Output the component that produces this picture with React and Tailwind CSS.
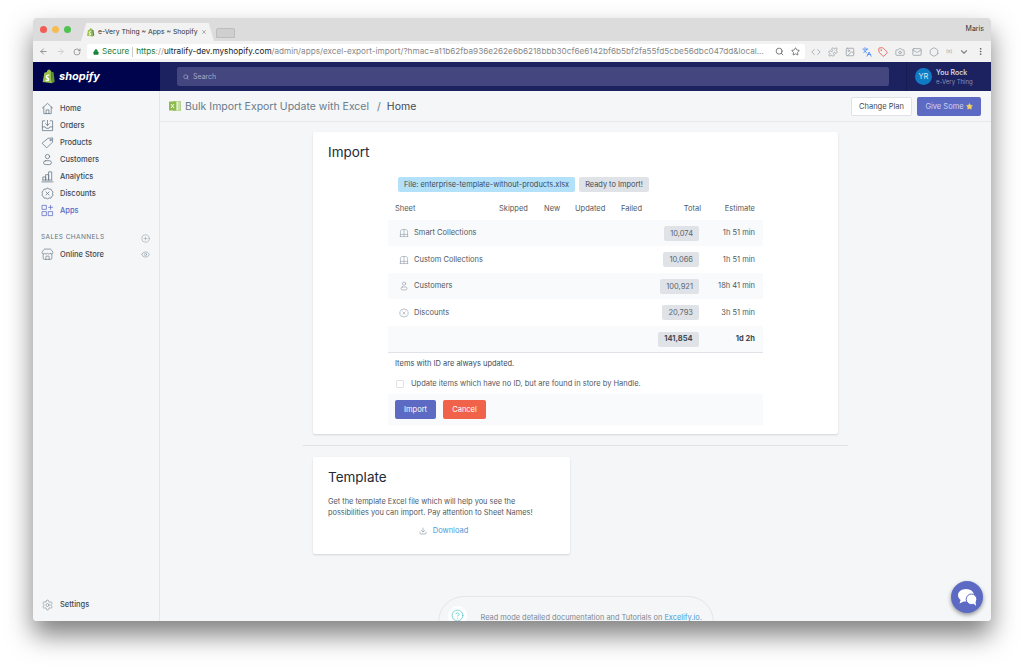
import React from 'react';
import {
  Tag, CirclePlus, Eye, Store, Settings, Search, ArrowLeft, ArrowRight, RotateCw, Lock, Star, X, MoreVertical,
  Download, Camera, Mail, Code, Languages, Puzzle, Image, Hexagon, CircleHelp, ChevronDown,
} from 'lucide-react';

const font = 'font-["Inter","Liberation_Sans",sans-serif]';

function Glyph({ size = 13, className = '', children }) {
  return (
    <svg width={size} height={size} viewBox="0 0 14 14" fill="none" stroke="currentColor" strokeWidth="0.8" strokeLinecap="round" strokeLinejoin="round" className={className}>
      {children}
    </svg>
  );
}

const HomeGlyph = (p) => (
  <Glyph {...p}><path d="M1.500 6.500 7 1.500l5.500 5M3 5.500V12.500H11V5.500M5.500 12.500V8.500H8.500V12.500" /></Glyph>
);
const OrdersGlyph = (p) => (
  <Glyph {...p}><path d="M4 2H1.500V12.500H12.500V2H10M1.500 8.500H4.500L5.500 10H8.500L9.500 8.500H12.500M7 1.500V7M5 5l2 2 2-2" /></Glyph>
);
const ProductGlyph = (p) => (
  <Glyph {...p}><path d="M1.500 7.500 7.500 2.500 12.500 2 12.500 6.500 6.500 12.500Z" /><circle cx="10.300" cy="4.300" r="0.800" /></Glyph>
);
const PersonGlyph = (p) => (
  <Glyph {...p}><circle cx="7" cy="3.800" r="2.300" /><rect x="2.800" y="8.300" width="8.400" height="4.200" rx="2.100" /></Glyph>
);
const AnalyticsGlyph = (p) => (
  <Glyph {...p}><path d="M1 12.800H13M2 10.800V7.500H5V10.800M5 10.800V5H8.200V10.800M8.200 10.800V2H11.500V10.800M2 10.800H11.500" /></Glyph>
);
const DiscountGlyph = (p) => (
  <Glyph {...p}><path d="M7 1.200 8.700 2.300 10.700 2.200 11.500 4 13 5.300 12.400 7.200 13 9 11.500 10.200 10.700 12 8.700 11.800 7 12.800 5.300 11.800 3.300 12 2.500 10.200 1 9 1.600 7.200 1 5.300 2.500 4 3.300 2.200 5.300 2.300Z" /><path d="M5.300 5.300 8.700 8.700M8.700 5.300 5.300 8.700" /></Glyph>
);
const AppsGlyph = (p) => (
  <Glyph {...p}><rect x="1.500" y="1.500" width="4.300" height="4.300" /><rect x="1.500" y="8.200" width="4.300" height="4.300" /><rect x="8.200" y="8.200" width="4.300" height="4.300" /><path d="M10.300 1.500V5.800M8.200 3.600H12.500" /></Glyph>
);
const CollectionGlyph = (p) => (
  <Glyph {...p}><path d="M2 12V4.500C2 3 3.500 2 7 2S12 3 12 4.500V12M7 2V12M1.500 12H12.500M2 9H12" /></Glyph>
);

const navItems = [
  { label: 'Home', icon: HomeGlyph },
  { label: 'Orders', icon: OrdersGlyph },
  { label: 'Products', icon: ProductGlyph },
  { label: 'Customers', icon: PersonGlyph },
  { label: 'Analytics', icon: AnalyticsGlyph },
  { label: 'Discounts', icon: DiscountGlyph },
];

const rows = [
  { name: 'Smart Collections', icon: CollectionGlyph, total: '10,074', estimate: '1h 51 min', shaded: true, h: 'h-[26px]' },
  { name: 'Custom Collections', icon: CollectionGlyph, total: '10,066', estimate: '1h 51 min', shaded: false, h: 'h-[27px]' },
  { name: 'Customers', icon: PersonGlyph, total: '100,921', estimate: '18h 41 min', shaded: true, h: 'h-[26px]' },
  { name: 'Discounts', icon: DiscountGlyph, total: '20,793', estimate: '3h 51 min', shaded: false, h: 'h-[27px]' },
];

function ShopifyBag({ size = 16 }) {
  return (
    <svg width={size} height={size} viewBox="0 0 16 18" className="shrink-0">
      <path d="M1 15.500 3 4.500 6 3.500C6.500 1.500 8 .5 9.500.8L11 2.500 12.200 17 1 15.500Z" fill="#95bf47" />
      <path d="M11 2.500 12.200 3.600 14 4 15.500 15.200 12.200 17Z" fill="#5e8e3e" />
      <path d="M9.200 6.800 8.700 8.400C7.600 7.900 6.400 8.200 6.400 9 6.400 10 9 10.400 9 12.500 9 14.200 7.400 15 6 14.800 5.200 14.700 4.600 14.300 4.300 14L4.700 12.500C5.200 12.900 6.600 13.500 6.800 12.700 7 11.500 4.500 11.200 4.500 9.200 4.500 7.300 6.900 6 9.200 6.800Z" fill="#fff" />
    </svg>
  );
}

function ExcelMark() {
  return (
    <svg width="12" height="12" viewBox="0 0 12 12">
      <rect x="4" y="1" width="8" height="10" rx="0.5" fill="#b5d48a" />
      <path d="M6 3H11M6 5H11M6 7H11M6 9H11M8.500 1V11" stroke="#fff" strokeWidth="0.5" />
      <rect x="0" y="1.500" width="7" height="9" rx="0.5" fill="#8cba4e" />
      <path d="M2 4 5 8M5 4 2 8" stroke="#fff" strokeWidth="0.9" />
    </svg>
  );
}

function ChatGlyph() {
  return (
    <svg width="21" height="19" viewBox="0 0 21 19">
      <path d="M9 1C4.500 1 1 3.800 1 7.300c0 1.900 1 3.500 2.600 4.700L2.500 15.500 6.700 13.400c.7.100 1.500.2 2.300.2 4.500 0 8-2.800 8-6.300S13.500 1 9 1Z" fill="#fff" />
      <circle cx="14.500" cy="11.300" r="5.300" fill="#fff" stroke="#5c6ac4" strokeWidth="1" />
      <path d="M16.500 15.500 19 18 18.600 13.800Z" fill="#fff" />
    </svg>
  );
}

function Sidebar() {
  return (
    <aside className="w-[127px] shrink-0 border-r border-[#e3e6ea] bg-[#f4f6f8] flex flex-col pt-[9px]">
      {navItems.map((item) => (
        <div key={item.label} className="h-[17px] flex items-center pl-[8px]">
          <item.icon size={13} className="text-[#637381]" />
          <span className="ml-[6px] text-[7.5px] font-medium text-[#3f4a54]">{item.label}</span>
        </div>
      ))}
      <div className="h-[17px] flex items-center pl-[8px]">
        <AppsGlyph size={13} className="text-[#5c6ac4]" />
        <span className="ml-[6px] text-[7.5px] font-medium text-[#5c6ac4]">Apps</span>
      </div>
      <div className="mt-[11px] h-[16px] flex items-center justify-between pl-[8px] pr-[9px]">
        <span className="text-[6.5px] tracking-[0.4px] text-[#637381]">SALES CHANNELS</span>
        <CirclePlus size={9} strokeWidth={1.2} className="text-[#798c9c]" />
      </div>
      <div className="h-[17px] flex items-center justify-between pl-[8px] pr-[9px]">
        <div className="flex items-center">
          <Store size={13} strokeWidth={1.2} className="text-[#637381]" />
          <span className="ml-[6px] text-[7.5px] font-medium text-[#3f4a54]">Online Store</span>
        </div>
        <Eye size={9} strokeWidth={1.4} className="text-[#798c9c]" />
      </div>
      <div className="mt-auto mb-[8px] h-[17px] flex items-center pl-[8px]">
        <Settings size={12} strokeWidth={1} className="text-[#637381] w-[13px]" />
        <span className="ml-[6px] text-[7.5px] font-medium text-[#3f4a54]">Settings</span>
      </div>
    </aside>
  );
}

function ImportCard() {
  return (
    <section className="w-[525px] h-[302px] bg-white rounded-[2px] shadow-[0_1px_2px_rgba(63,63,68,0.18)] pt-[12px] px-[15px]">
      <h2 className="text-[13.5px] leading-[17px] text-[#212b36]">Import</h2>
      <div className="mt-[16px] ml-[70px] flex gap-[4px] h-[15px] text-[7.4px] text-[#3f4a54]">
        <span className="flex items-center px-[6px] rounded-[2px] bg-[#b4e1fa]">File: enterprise-template-without-products.xlsx</span>
        <span className="flex items-center px-[6px] rounded-[2px] bg-[#dfe3e8]">Ready to Import!</span>
      </div>
      <div className="ml-[60px] w-[375px] mt-[6px]">
        <div className="h-[22px] grid grid-cols-[104px_45px_31px_46px_42px_1fr_54px] items-center pl-[7px] pr-[8px] text-[7.5px] text-[#50585f]">
          <span>Sheet</span>
          <span>Skipped</span>
          <span>New</span>
          <span>Updated</span>
          <span>Failed</span>
          <span className="text-right">Total</span>
          <span className="text-right">Estimate</span>
        </div>
        {rows.map((row) => (
          <div key={row.name} className={`${row.h} flex items-center pl-[11px] pr-[8px] text-[7.5px] text-[#50585f] ${row.shaded ? 'bg-[#f9fafb]' : ''}`}>
            <row.icon size={10} className="text-[#8a97a5]" />
            <span className="ml-[5px]">{row.name}</span>
            <span className="ml-auto mr-[7px] h-[15px] pt-[1px] flex items-center px-[6px] rounded-[2px] bg-[#dfe3e8] text-[#5b6670]">{row.total}</span>
            <span className="w-[49px] text-right">{row.estimate}</span>
          </div>
        ))}
        <div className="h-[27px] flex items-center pr-[8px] text-[7.5px] font-bold text-[#3f4a54] bg-[#f9fafb] border-b border-[#dfe3e8]">
          <span className="ml-auto mr-[7px] h-[15px] flex items-center px-[6.5px] rounded-[2px] bg-[#dfe3e8]">141,854</span>
          <span className="w-[49px] text-right">1d 2h</span>
        </div>
        <p className="h-[22px] flex items-center pl-[7px] text-[7.5px] text-[#3f4a54]">Items with ID are always updated.</p>
        <label className="h-[17px] mb-[2px] flex items-center pl-[8px] text-[7.5px] text-[#50585f]">
          <span className="w-[8px] h-[8px] rounded-[1px] border border-[#dfe3e8] bg-white" />
          <span className="ml-[7px]">Update items which have no ID, but are found in store by Handle.</span>
        </label>
        <div className="h-[31px] bg-[#f9fafb] flex items-center gap-[7px] pl-[7px]">
          <button className="w-[41px] h-[19px] rounded-[2px] bg-[#5c6ac4] text-white text-[7.5px]">Import</button>
          <button className="w-[43px] h-[19px] rounded-[2px] bg-[#f0624a] text-white text-[7.5px]">Cancel</button>
        </div>
      </div>
    </section>
  );
}

function TemplateCard() {
  return (
    <section className="w-[257px] h-[97px] bg-white rounded-[2px] shadow-[0_1px_2px_rgba(63,63,68,0.18)] pt-[12px] px-[15px]">
      <h2 className="text-[13.5px] leading-[17px] text-[#212b36]">Template</h2>
      <p className="mt-[11px] text-[7.4px] leading-[10.5px] text-[#50585f]">
        Get the template Excel file which will help you see the possibilities you can import. Pay attention to Sheet Names!
      </p>
      <div className="mt-[7px] ml-[4px] flex items-center justify-center gap-[6px] text-[7.5px] text-[#4a9ad8]">
        <Download size={8} className="text-[#919eab]" />
        <span>Download</span>
      </div>
    </section>
  );
}

function Main() {
  return (
    <main className="flex-1 min-w-0 bg-[#f4f6f8] flex flex-col">
      <header className="h-[31px] shrink-0 border-b border-[#e6e9ec] flex items-center pl-[9px] pr-[10px]">
        <ExcelMark />
        <span className="ml-[4px] pt-[1px] text-[10.5px] text-[#6b7b8a]">Bulk Import Export Update with Excel</span>
        <span className="ml-[8px] pt-[1px] text-[10.5px] text-[#6b7b8a]">/</span>
        <span className="ml-[6px] pt-[1px] text-[10.5px] text-[#3f4a54]">Home</span>
        <button className="ml-auto w-[61px] h-[19px] pt-[1px] rounded-[2px] border border-[#dfe3e8] bg-white text-[7.5px] text-[#3f4a54]">Change Plan</button>
        <button className="ml-[5px] w-[64px] h-[19px] pt-[1px] rounded-[2px] bg-[#5c6ac4] text-[7.5px] text-[#d0d4ee] flex items-center justify-center gap-[2px]">
          Give Some <Star size={7} fill="#f4d35e" stroke="#f4d35e" />
        </button>
      </header>
      <div className="flex-1 flex flex-col items-center min-h-0">
        <div className="mt-[10px]"><ImportCard /></div>
        <div className="mt-[11px] w-[545px] h-px bg-[#dfe3e8] shrink-0" />
        <div className="mt-[11px] w-[525px]"><TemplateCard /></div>
        <div className="mt-[42px] w-[276px] h-[60px] shrink-0 rounded-[26px] border border-[#e3e6ea] flex items-start pl-[9px] pt-[9px]">
          <span className="w-[19px] h-[19px] rounded-full bg-white flex items-center justify-center">
            <CircleHelp size={13} strokeWidth={1.3} className="text-[#47c1bf]" />
          </span>
          <span className="ml-[14px] mt-[6px] text-[7.4px] whitespace-nowrap text-[#7c8894]">
            Read mode detailed documentation and Tutorials on <span className="text-[#4a9ad8]">Excelify.io.</span>
          </span>
        </div>
      </div>
    </main>
  );
}

export default function App() {
  const extensions = [Code, Puzzle, Image, Languages, Tag, Camera, Mail, Hexagon];
  return (
    <div className={`w-[1024px] h-[668px] bg-white overflow-hidden pt-[18px] pl-[33px] ${font}`}>
      <div className="relative w-[958px] h-[603px] rounded-[4px] overflow-hidden shadow-[0_14px_26px_rgba(0,0,0,0.5)] flex flex-col">
        <div className="h-[23px] shrink-0 bg-[#dcdcdc] flex items-end pl-[7px] pr-[7px]">
          <div className="flex gap-[5px] self-center">
            <span className="w-[7px] h-[7px] rounded-full bg-[#f25c54]" />
            <span className="w-[7px] h-[7px] rounded-full bg-[#f5bc4f]" />
            <span className="w-[7px] h-[7px] rounded-full bg-[#4fc24f]" />
          </div>
          <div className="ml-[10px] w-[133px] h-[18px] bg-[#f2f2f2] [clip-path:polygon(4%_0,96%_0,100%_100%,0_100%)] flex items-center pl-[5px] pr-[7px]">
            <ShopifyBag size={9} />
            <span className="ml-[3px] text-[6.8px] whitespace-nowrap text-[#333]">e-Very Thing ~ Apps ~ Shopify</span>
            <X size={6} className="ml-auto shrink-0 text-[#666]" />
          </div>
          <div className="ml-[2px] mb-[3px] w-[19px] h-[10px] rounded-t-[2px] bg-[#cfcfcf] border border-[#bdbdbd]" />
          <span className="ml-auto self-center text-[7px] text-[#333]">Maris</span>
        </div>

        <div className="h-[21px] shrink-0 bg-[#f2f2f2] flex items-center pl-[6px] pr-[6px]">
          <ArrowLeft size={9} className="text-[#777]" />
          <ArrowRight size={9} className="ml-[8px] text-[#c4c4c4]" />
          <RotateCw size={8} className="ml-[8px] text-[#777]" />
          <div className="ml-[6px] w-[718px] h-[15px] bg-white rounded-[2px] flex items-center pl-[6px] pr-[5px] text-[8.2px]">
            <Lock size={6} fill="#188038" stroke="#188038" className="shrink-0" />
            <span className="ml-[3px] text-[#188038]">Secure</span>
            <span className="mx-[3px] w-px h-[10px] bg-[#ccc] shrink-0" />
            <span className="whitespace-nowrap">
              <span className="text-[#188038]">https</span>
              <span className="text-[#999]">://</span>
              <span className="text-[#222]">ultralify-dev.myshopify.com</span>
              <span className="text-[#888]">/admin/apps/excel-export-import/?hmac=a11b62fba936e262e6b6218bbb30cf6e6142bf6b5bf2fa55fd5cbe56dbc047dd&local...</span>
            </span>
            <Search size={9} className="ml-auto shrink-0 text-[#555]" />
            <Star size={9} className="ml-[7px] shrink-0 text-[#555]" />
          </div>
          <div className="ml-[6px] flex-1 flex items-center justify-between">
            {extensions.map((Icon, i) => (
              <Icon key={i} size={10} className={i === 4 ? 'text-[#e2574c]' : i === 3 ? 'text-[#4285f4]' : 'text-[#9ca3a9]'} />
            ))}
            <span className="text-[5px] text-[#999]">(x)</span>
            <ChevronDown size={10} strokeWidth={3} className="text-[#888]" />
            <MoreVertical size={9} className="text-[#555]" />
          </div>
        </div>

        <div className="h-[29px] shrink-0 flex">
          <div className="w-[127px] bg-[#00044c] flex items-center pl-[8px]">
            <ShopifyBag size={15} />
            <span className="ml-[3px] text-[11px] font-bold italic text-white">shopify</span>
          </div>
          <div className="flex-1 bg-[#1c2260] flex items-center pl-[17px]">
            <div className="w-[712px] h-[19px] pt-[1px] rounded-[2px] bg-[#43467f] flex items-center pl-[6px] text-[7px] text-[#a5a8c8]">
              <Search size={6} className="text-[#c4c6dc]" />
              <span className="ml-[4px]">Search</span>
            </div>
            <div className="ml-[17px] h-full border-l border-[#161b52] pl-[8px] flex items-center">
              <span className="w-[17px] h-[17px] rounded-full bg-[#0f7bc4] text-[7.5px] text-[#cfe6f6] flex items-center justify-center">YR</span>
              <div className="ml-[4px] leading-[9px]">
                <div className="text-[7px] font-medium text-[#dfe3e8]">You Rock</div>
                <div className="text-[6px] text-[#8a8fb8]">e-Very Thing</div>
              </div>
            </div>
          </div>
        </div>

        <div className="flex-1 flex min-h-0">
          <Sidebar />
          <Main />
        </div>

        <button className="absolute right-[8px] bottom-[8px] w-[32px] h-[32px] rounded-full bg-[#5c6ac4] shadow-[0_2px_4px_rgba(0,0,0,0.4)] flex items-center justify-center">
          <ChatGlyph />
        </button>
      </div>
    </div>
  );
}
